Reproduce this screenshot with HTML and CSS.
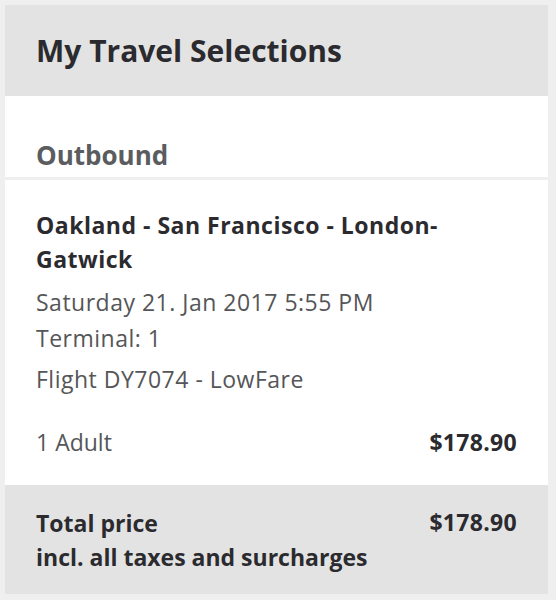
FILE: index.html
```html
<!DOCTYPE html>
<html>
<head>
<meta charset="utf-8">
<link rel="stylesheet" href="styles.css">
</head>
<body>
<div class="card">
  <div class="header"><h1 class="title">My Travel Selections</h1></div>
  <div class="section-head"><h2 class="section-title">Outbound</h2></div>
  <div class="flight">
    <div class="route">Oakland - San Francisco - London-<br>Gatwick</div>
    <div class="detail">Saturday 21. Jan 2017 5:55 PM</div>
    <div class="detail">Terminal: 1</div>
    <div class="detail flight-no">Flight DY7074 - LowFare</div>
    <div class="row pax">
      <span class="pax-label">1 Adult</span>
      <span class="price">$178.90</span>
    </div>
  </div>
  <div class="total">
    <div class="total-text">
      <div>Total price</div>
      <div>incl. all taxes and surcharges</div>
    </div>
    <div class="price">$178.90</div>
  </div>
</div>
</body>
</html>
```
FILE: styles.css
```css
html, body {
  margin: 0;
  padding: 0;
  background: #efefef;
}
body {
  font-family: "Open Sans", Lato, sans-serif;
  color: #555658;
}
.card {
  margin: 5px 8px 0 5px;
  width: 543px;
}
.header {
  background: #e3e3e3;
  height: 91px;
  padding: 0 31px;
  display: flex;
  align-items: center;
  box-sizing: border-box;
}
.title {
  margin: 0;
  font-size: 30px;
  font-weight: 700;
  color: #2b2b2f;
}
.section-head {
  background: #fff;
  height: 81px;
  padding: 0 31px;
  box-sizing: border-box;
  display: flex;
  align-items: flex-end;
}
.section-title {
  margin: 0 0 4px;
  font-size: 26px;
  font-weight: 700;
  color: #5a5c5f;
}
.flight {
  background: #fff;
  margin-top: 3px;
  height: 305px;
  box-sizing: border-box;
  padding: 28px 31px 0;
}
.route {
  font-size: 23px;
  font-weight: 700;
  line-height: 34px;
  letter-spacing: 0.5px;
  color: #2b2b2f;
}
.detail {
  font-size: 23px;
  line-height: 36px;
  letter-spacing: 0.5px;
}
.route + .detail {
  margin-top: 8px;
}
.flight-no {
  margin-top: 5px;
}
.row {
  display: flex;
  justify-content: space-between;
  align-items: baseline;
}
.pax {
  margin-top: 29px;
  font-size: 23px;
}
.price {
  font-size: 23px;
  font-weight: 700;
  letter-spacing: 0.3px;
  color: #2b2b2f;
}
.total {
  background: #e3e3e3;
  height: 109px;
  box-sizing: border-box;
  padding: 21px 31px 0;
  display: flex;
  justify-content: space-between;
  align-items: flex-start;
}
.total-text {
  font-size: 23px;
  font-weight: 700;
  line-height: 34px;
  color: #2b2b2f;
}
.total .price {
  line-height: 34px;
  margin-top: -1px;
}
```
